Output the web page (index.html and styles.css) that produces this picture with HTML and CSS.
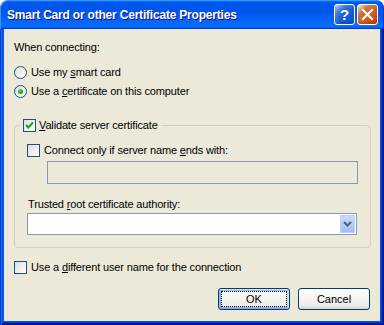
FILE: index.html
```
<!DOCTYPE html>
<html lang="en">
<head>
    <meta charset="UTF-8">
    <meta name="viewport" content="width=device-width, initial-scale=1.0">
    <title>Smart Card or other Certificate Properties</title>
    <link rel="stylesheet" href="styles.css">
</head>
<body>
    <div class="window">
        <div class="title-bar">
            <span class="title-text">Smart Card or other Certificate Properties</span>
            <div class="title-controls">
                <button type="button" class="cap-btn help-btn" aria-label="Help">?</button>
                <button type="button" class="cap-btn close-btn" aria-label="Close">
                    <svg width="13" height="13" viewBox="0 0 13 13">
                        <path d="M2 2 L11 11 M11 2 L2 11" stroke="#fff" stroke-width="2.2" stroke-linecap="square"/>
                    </svg>
                </button>
            </div>
        </div>

        <div class="frame">
            <div class="client">
                <div class="row heading">When connecting:</div>

                <label class="row opt first-opt">
                    <span class="radio"></span>
                    <span>Use my <u>s</u>mart card</span>
                </label>
                <label class="row opt second-opt">
                    <span class="radio checked"><span class="dot"></span></span>
                    <span>Use a <u>c</u>ertificate on this computer</span>
                </label>

                <fieldset class="group">
                    <legend class="group-title">
                        <span class="check checked">
                            <svg width="11" height="11" viewBox="0 0 11 11">
                                <path d="M2 5 L4.3 7.5 L9 2.5" fill="none" stroke="#21a121" stroke-width="2"/>
                            </svg>
                        </span>
                        <span><u>V</u>alidate server certificate</span>
                    </legend>
                    <div class="group-body">
                        <label class="row opt">
                            <span class="check"></span>
                            <span>Connect only if server name <u>e</u>nds with:</span>
                        </label>
                        <div class="text-field"></div>
                        <div class="row field-label">Trusted <u>r</u>oot certificate authority:</div>
                        <div class="combo">
                            <span class="combo-value"></span>
                            <span class="combo-btn">
                                <svg width="9" height="6" viewBox="0 0 9 6">
                                    <path d="M1 1 L4.5 4.5 L8 1" fill="none" stroke="#4d6185" stroke-width="2"/>
                                </svg>
                            </span>
                        </div>
                    </div>
                </fieldset>

                <label class="row opt other-user">
                    <span class="check"></span>
                    <span>Use a <u>d</u>ifferent user name for the connection</span>
                </label>

                <div class="buttons">
                    <button type="button" class="btn default">OK</button>
                    <button type="button" class="btn">Cancel</button>
                </div>
            </div>
        </div>
    </div>
</body>
</html>
```

FILE: styles.css
```
* {
    margin: 0;
    padding: 0;
    box-sizing: border-box;
}

body {
    font-family: "Liberation Sans", Arial, sans-serif;
    font-size: 11px;
    letter-spacing: -0.15px;
    color: #000;
    background: #fff;
}

.window {
    width: 384px;
    height: 325px;
    display: flex;
    flex-direction: column;
    border-radius: 8px 8px 0 0;
    overflow: hidden;
}

/* title bar */
.title-bar {
    height: 29px;
    flex: none;
    display: flex;
    align-items: center;
    justify-content: space-between;
    padding: 0 6px 0 7px;
    background: linear-gradient(180deg, #0997ff, #0058ee 8%, #0055ea 40%, #0a6cff 88%, #0a6cff 93%, #005bff 95%, #003dd7 96%, #003dd7);
    border-radius: 8px 8px 0 0;
    box-shadow: inset 1px 1px #3d95ff, inset -1px 0 #0831d9;
}

.title-text {
    color: #fff;
    font-weight: bold;
    font-size: 12px;
    letter-spacing: -0.2px;
    text-shadow: 1px 1px #0f1089;
    white-space: nowrap;
}

.title-controls {
    display: flex;
    gap: 2px;
}

.cap-btn {
    width: 21px;
    height: 21px;
    border: 1px solid #fff;
    border-radius: 3px;
    display: flex;
    align-items: center;
    justify-content: center;
    color: #fff;
    font-family: "Liberation Sans", Arial, sans-serif;
    font-weight: bold;
    font-size: 15px;
    box-shadow: inset 0 -1px 2px 1px rgba(0, 0, 0, 0.15);
}

.help-btn {
    background: radial-gradient(circle at 90% 90%, #0054e9 0%, #2263d5 55%, #4479e4 70%, #a3bbec 90%, #fff 100%);
}

.close-btn {
    background: radial-gradient(circle at 90% 90%, #cc4600 0%, #dc6527 55%, #cd7546 70%, #ffccb2 90%, #fff 100%);
}

/* window frame */
.frame {
    flex: 1;
    padding: 0 4px 4px;
    background: #0055e5;
    box-shadow: inset 1px 0 #0831d9, inset 2px 0 #166aee, inset -1px -1px #00138c, inset -2px -2px #001ea0, inset -3px -3px #003bda;
}

.client {
    height: 100%;
    background: #ece9d8;
    padding: 12px 9px 0 10px;
    display: flex;
    flex-direction: column;
}

.row {
    height: 13px;
    line-height: 13px;
    white-space: nowrap;
}

.opt {
    display: flex;
    align-items: center;
    gap: 4px;
}

.first-opt {
    margin-top: 12px;
}

.second-opt {
    margin-top: 6px;
}

/* radios & checkboxes */
.radio {
    width: 13px;
    height: 13px;
    border-radius: 50%;
    border: 1px solid #1c5180;
    background: linear-gradient(135deg, #dcdcd7, #fff);
    display: flex;
    align-items: center;
    justify-content: center;
    flex: none;
}

.dot {
    width: 5px;
    height: 5px;
    border-radius: 50%;
    background: radial-gradient(circle at 35% 35%, #55d551, #21a121 60%, #1a8c1a);
}

.check {
    width: 13px;
    height: 13px;
    border: 1px solid #1c5180;
    background: linear-gradient(135deg, #dcdcd7, #fff);
    display: flex;
    align-items: center;
    justify-content: center;
    flex: none;
}

/* group box */
.group {
    width: 357px;
    margin-top: 21px;
    border: 1px solid #d0d0bf;
    border-radius: 4px;
    padding: 0;
}

.group-title {
    margin-left: 5px;
    padding: 0 3px;
    height: 13px;
    line-height: 13px;
    display: flex;
    align-items: center;
    gap: 3px;
}

.group-body {
    padding: 12px 0 12px 12px;
    display: flex;
    flex-direction: column;
}

.text-field {
    width: 311px;
    height: 23px;
    margin: 4px 0 0 20px;
    background: #ece9d8;
    border: 1px solid #7f9db9;
}

.field-label {
    margin-top: 14px;
    padding-left: 1px;
}

.combo {
    width: 330px;
    height: 22px;
    margin-top: 2px;
    background: #fff;
    border: 1px solid #7f9db9;
    display: flex;
    justify-content: space-between;
    padding: 1px;
}

.combo-btn {
    width: 15px;
    height: 18px;
    border: 1px solid #b9cef9;
    border-radius: 1px;
    background: linear-gradient(180deg, #c9daff, #b4c8f6 60%, #a6bcf2);
    display: flex;
    align-items: center;
    justify-content: center;
}

.other-user {
    margin-top: 13px;
}

/* buttons */
.buttons {
    margin-top: 14px;
    display: flex;
    justify-content: flex-end;
    gap: 8px;
    padding-right: 1px;
}

.btn {
    width: 72px;
    height: 22px;
    font-family: "Liberation Sans", Arial, sans-serif;
    font-size: 11px;
    color: #000;
    border: 1px solid #003c74;
    border-radius: 3px;
    background: linear-gradient(180deg, #fff, #ecebe5 86%, #d8d0c4);
}

.btn.default {
    box-shadow: inset -1px 1px #cee7ff, inset 1px 2px #98b8ea, inset -2px 2px #bcd4f6, inset 1px -1px #89ade4, inset 2px -2px #89ade4;
    outline: 1px dotted #000;
    outline-offset: -4px;
}
```
